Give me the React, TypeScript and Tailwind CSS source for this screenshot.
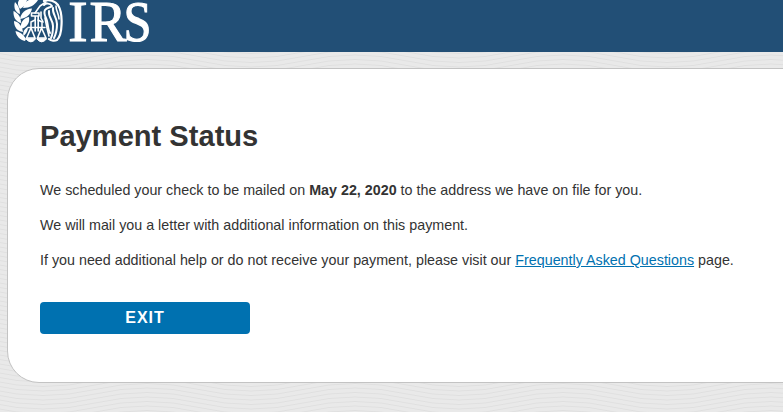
function Eagle() {
  return (
    <g fill="none" stroke="#fff" strokeLinecap="round" strokeLinejoin="round">
      <g fill="#fff" stroke="none">
        <path d="M19 0 H27 C26 4 24 7 20 9 C18 6 17 3 19 0Z" />
        <path d="M29 0 H38 C35 5 30 8 23 8 C24 4 26 1 29 0Z" />
        <path d="M15 2 C18 5 20 9 20 14 C16 13 13 8 15 2Z" />
        <path d="M32 8.5 C31 14 27 18 20 19 C21 13 25 9 32 8.5Z" />
        <path d="M13.5 11 C18 13 21 17 21 23 C16 22 13 17 13.5 11Z" />
        <path d="M29 17 C30 23 27 27 21 29 C20 23 23 18 29 17Z" />
        <path d="M14 21 C19 22 22 26 23 32 C17 31 14 27 14 21Z" />
        <path d="M28 27 C28 31 26 34 23.5 36 C22.5 32 24 29 28 27Z" />
        <path d="M15.5 31 C20 32 23 34 26 39 L25 41 C20 40 16 36 15.5 31Z" />
      </g>
      <path d="M31.5 13 H39 V16 H31.5 Z M35.2 16 V31 M38.2 16 V31" strokeWidth="1.6" />
      <path d="M35 13 L40 6 L46 2 M41 12 V18 L43 22" strokeWidth="1.6" />
      <path d="M31 27 V22 L35 20 M38 20 L42 22 V27 M28 27.5 H45" strokeWidth="1.5" />
      <path d="M31 28 L26.5 38 H35 Z M41.5 28 L37.5 38 H46 Z" strokeWidth="1.6" />
      <path d="M26 39 Q31 45 35.5 39 Z M37 39 Q41.5 45 46.5 39 Z" fill="#fff" strokeWidth="1" />
      <path d="M44 1 C49 -1 55 1 58 5 C61 10 62 17 61.5 25 C61.3 32 60 37 57 40 C55 41 51 41 49 39" strokeWidth="2.2" />
      <path d="M44 5 C46 3 50 3 52 6 C50 8 47 7 45 10 C43 14 46 17 47 21 C48 25 48 30 50 33" strokeWidth="2" />
      <path d="M49 11 C48 17 53 20 53 26 C53 31 53 34 51 38" strokeWidth="2" />
      <path d="M53 8 C52 14 57 17 57 24 C57 30 56 34 54 38" strokeWidth="2" />
      <path d="M56 6 C56 11 59 14 59 19" strokeWidth="1.6" />
      <path d="M45 18 L47 28 L49 36" strokeWidth="1.6" />
    </g>
  );
}

function Logo() {
  return (
    <svg className="block" width="160" height="52" viewBox="0 0 160 52" role="img" aria-label="IRS">
      <Eagle />
      <g fill="#fff" stroke="#fff" strokeWidth="1.1" fontFamily="'Liberation Serif', serif" fontSize="58">
        <text x="68.3" y="40.8">I</text>
        <text x="89.5" y="40.8" textLength="37" lengthAdjust="spacingAndGlyphs">R</text>
        <text x="123.5" y="40.8" textLength="28" lengthAdjust="spacingAndGlyphs">S</text>
      </g>
    </svg>
  );
}

function Waves() {
  return (
    <svg className="absolute inset-0 h-full w-full" aria-hidden="true">
      <defs>
        <pattern id="waves" width="208" height="9" patternUnits="userSpaceOnUse" x="95">
          <g fill="none" stroke="#e0e0e0" strokeWidth="1">
            {[-9, -4.5, 0, 4.5, 9, 13.5, 18].map((y) => (
              <path key={y} d={`M0 ${y} Q52 ${y - 12} 104 ${y} T208 ${y}`} />
            ))}
          </g>
        </pattern>
      </defs>
      <rect width="100%" height="100%" fill="url(#waves)" />
    </svg>
  );
}

export default function App() {
  return (
    <div className="flex h-[412px] flex-col overflow-hidden font-['Liberation_Sans',sans-serif] text-[#333]">
      <header className="h-[52px] shrink-0 bg-[#224f76]">
        <Logo />
      </header>
      <main className="relative flex-1 bg-[#e9e9e9] pt-4 pl-[7px]">
        <Waves />
        <section className="relative h-[315px] w-[820px] rounded-[32px] border border-[#c3c3c3] bg-white pt-[50px] pl-8">
          <h1 className="text-[29.1px] leading-[34px] font-bold">Payment Status</h1>
          <div className="mt-[27px] flex flex-col gap-[15px] text-[14.3px] leading-5">
            <p>
              We scheduled your check to be mailed on <b>May 22, 2020</b> to the address we have on file for you.
            </p>
            <p>We will mail you a letter with additional information on this payment.</p>
            <p>
              If you need additional help or do not receive your payment, please visit our{" "}
              <a href="#" className="text-[#0071b0] underline">Frequently Asked Questions</a> page.
            </p>
          </div>
          <button className="mt-8 h-8 w-[210px] rounded-[4px] bg-[#0071b0] text-[16px] leading-8 font-bold tracking-[1px] text-white">
            EXIT
          </button>
        </section>
      </main>
    </div>
  );
}
